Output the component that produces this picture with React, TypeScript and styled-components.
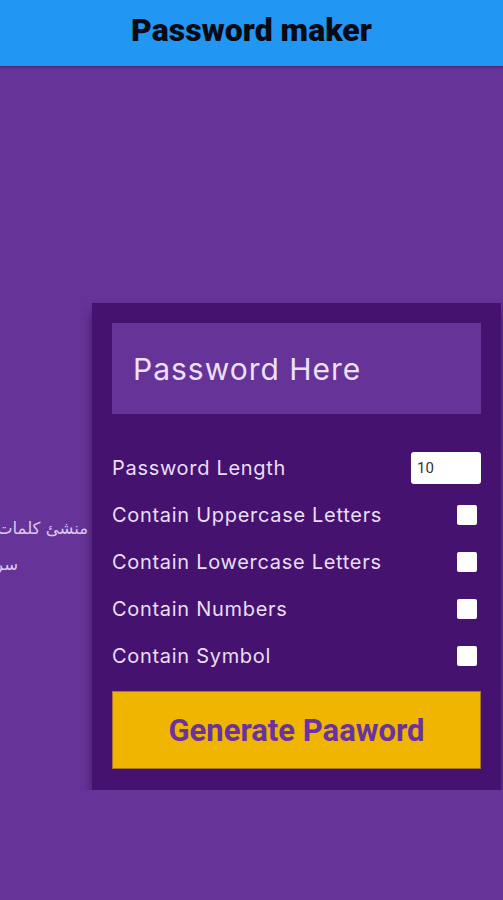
import React from "react";
import styled, { createGlobalStyle } from "styled-components";

const Global = createGlobalStyle`
  html, body { margin: 0; padding: 0; }
  body {
    background: #663399;
    font-family: Inter, "Noto Sans", sans-serif;
    overflow: hidden;
  }
`;

const Header = styled.header`
  height: 66px;
  background: #2196f3;
  display: flex;
  align-items: center;
  justify-content: center;
  padding-bottom: 6px;
  box-sizing: border-box;
  box-shadow: 0 1px 2px rgba(0, 0, 0, 0.35);
  position: relative;
`;

const Title = styled.h1`
  margin: 0;
  font-family: Roboto, "Liberation Sans", sans-serif;
  font-weight: 900;
  font-size: 32px;
  letter-spacing: 0px;
  color: #0a0a14;
`;

const Main = styled.main`
  display: flex;
  justify-content: flex-end;
  align-items: center;
  gap: 4px;
  padding: 237px 2px 0 0;
  overflow: hidden;
`;

const Caption = styled.div`
  flex-shrink: 0;
  width: 300px;
  text-align: right;
  font-family: "DejaVu Sans", sans-serif;
  font-size: 16.5px;
  line-height: 36px;
  color: #dcc8ee;
`;

const CaptionLine = styled.div<{ $indent?: number }>`
  white-space: nowrap;
  padding-right: ${(p) => p.$indent ?? 0}px;
`;

const Panel = styled.section`
  flex-shrink: 0;
  width: 409px;
  box-sizing: border-box;
  background: #45136f;
  padding: 20px 20px 21px;
  box-shadow: 0 8px 10px rgba(20, 0, 40, 0.45);
  display: flex;
  flex-direction: column;
`;

const Output = styled.div`
  height: 91px;
  background: #663399;
  display: flex;
  align-items: center;
  padding-left: 21px;
  font-size: 30px;
  color: #ece0f7;
  letter-spacing: 1px;
`;

const Options = styled.div`
  margin-top: 30px;
  display: flex;
  flex-direction: column;
`;

const Row = styled.label`
  height: 47px;
  display: flex;
  align-items: center;
  justify-content: space-between;
  font-size: 20px;
  letter-spacing: 0.7px;
  color: #e9def5;
`;

const NumberBox = styled.div`
  width: 70px;
  height: 32px;
  box-sizing: border-box;
  background: #fff;
  border-radius: 3px;
  display: flex;
  align-items: center;
  padding-left: 6px;
  font-family: Roboto, sans-serif;
  font-size: 15px;
  letter-spacing: 0;
  color: #333;
`;

const Check = styled.span`
  width: 20px;
  height: 20px;
  margin-right: 4px;
  background: #fff;
  border-radius: 2px;
`;

const Button = styled.button`
  margin-top: 12px;
  height: 78px;
  border: 1px solid #a8742e;
  background: #efb500;
  font-family: Roboto, "Liberation Sans", sans-serif;
  font-weight: 700;
  font-size: 31px;
  color: #6a32a0;
  cursor: pointer;
`;

const options = [
  "Contain Uppercase Letters",
  "Contain Lowercase Letters",
  "Contain Numbers",
  "Contain Symbol",
];

export default function App() {
  return (
    <>
      <Global />
      <Header>
        <Title>Password maker</Title>
      </Header>
      <Main>
        <Caption>
          <CaptionLine>منشئ كلمات المرور</CaptionLine>
          <CaptionLine $indent={70}>سريع وآمن</CaptionLine>
        </Caption>
        <Panel>
          <Output>Password Here</Output>
          <Options>
            <Row>
              Password Length
              <NumberBox>10</NumberBox>
            </Row>
            {options.map((o) => (
              <Row key={o}>
                {o}
                <Check />
              </Row>
            ))}
          </Options>
          <Button>Generate Paaword</Button>
        </Panel>
      </Main>
    </>
  );
}
